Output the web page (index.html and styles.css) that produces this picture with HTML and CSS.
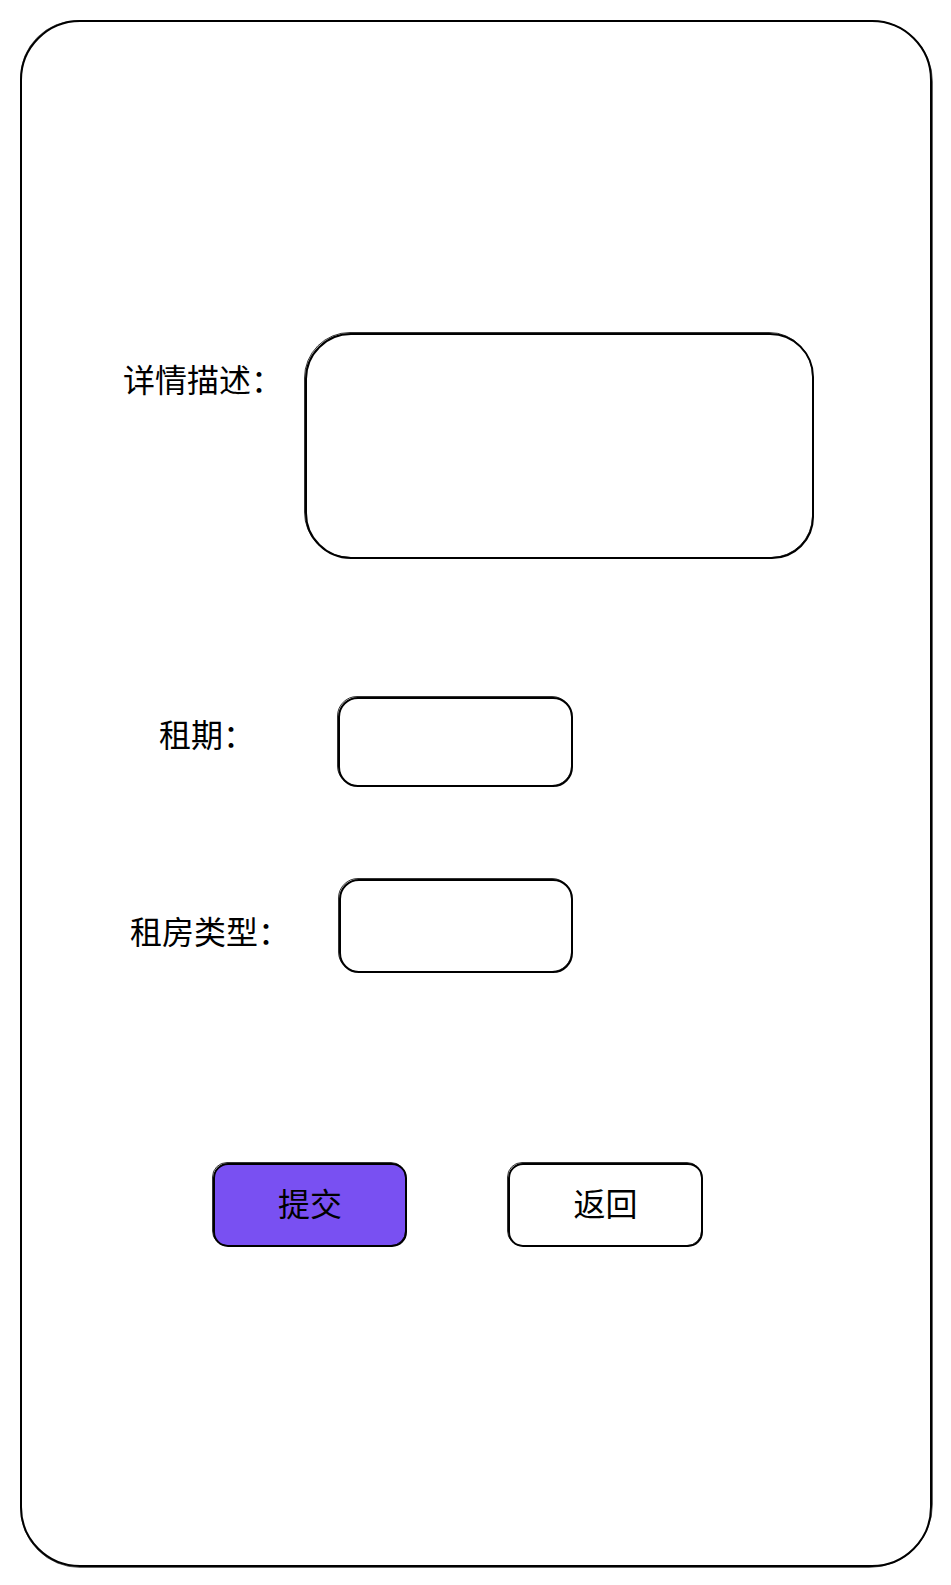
FILE: index.html
```html
<!DOCTYPE html>
<html lang="zh-CN">
<head>
<meta charset="utf-8">
<title>租房信息</title>
<link rel="stylesheet" href="styles.css">
</head>
<body>
<div class="frame">
  <div class="row row-desc">
    <div class="label label-desc">详情描述：</div>
    <div class="box textarea"></div>
  </div>
  <div class="row row-term">
    <div class="label label-term">租期：</div>
    <div class="box input input-term"></div>
  </div>
  <div class="row row-type">
    <div class="label label-type">租房类型：</div>
    <div class="box input input-type"></div>
  </div>
  <div class="actions">
    <div class="box btn btn-primary">提交</div>
    <div class="box btn btn-back">返回</div>
  </div>
</div>
</body>
</html>
```

FILE: styles.css
```css
html, body {
  margin: 0;
  padding: 0;
  background: #ffffff;
}

body {
  font-family: "Noto Sans CJK SC", "Noto Sans", sans-serif;
  color: #000000;
}

.frame {
  position: relative;
  margin: 20px;
  width: 912px;
  height: 1547px;
  box-sizing: border-box;
  border: 2px solid #000000;
  border-radius: 60px;
  padding-top: 311px;
}

.frame::after {
  content: "";
  position: absolute;
  inset: -2px -3px -3px -2px;
  border: 1px solid rgba(0, 0, 0, 0.6);
  border-radius: 58px 62px 64px 60px;
  pointer-events: none;
}

.row {
  display: flex;
  align-items: flex-start;
}

.label {
  font-size: 32px;
  line-height: 1;
  white-space: nowrap;
  flex: none;
}

.box {
  position: relative;
  box-sizing: border-box;
  border: 2px solid #000000;
  flex: none;
}

.box::after {
  content: "";
  position: absolute;
  inset: -3px -1px -1px -3px;
  border: 1.5px solid rgba(0, 0, 0, 0.8);
  border-radius: inherit;
  pointer-events: none;
}

/* row 1 */
.label-desc {
  margin-left: 101px;
  margin-top: 29px;
  width: 182px;
}

.textarea {
  width: 509px;
  height: 226px;
  border-radius: 46px 44px 42px 46px;
}

/* row 2 */
.row-term {
  margin-top: 138px;
}

.label-term {
  margin-left: 137px;
  margin-top: 20px;
  width: 179px;
}

.input {
  border-radius: 20px;
}

.input-term {
  width: 235px;
  height: 90px;
}

/* row 3 */
.row-type {
  margin-top: 92px;
}

.label-type {
  margin-left: 108px;
  margin-top: 35px;
  width: 209px;
}

.input-type {
  width: 234px;
  height: 94px;
}

/* buttons */
.actions {
  display: flex;
  margin-top: 190px;
  padding-left: 191px;
  gap: 101px;
}

.btn {
  height: 84px;
  border-radius: 15px;
  display: flex;
  align-items: center;
  justify-content: center;
  font-size: 32px;
  line-height: 1;
  padding-bottom: 6px;
}

.btn-primary {
  width: 194px;
  background: #7950f2;
}

.btn-back {
  width: 195px;
  background: #ffffff;
}
```
